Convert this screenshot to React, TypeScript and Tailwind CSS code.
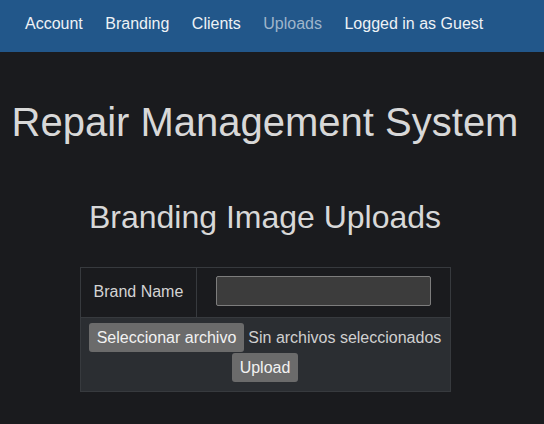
import React from "react";

export default function App() {
  const font = { fontFamily: '"Liberation Sans", Arial, sans-serif' };
  return (
    <div style={font} className="w-[544px] h-[424px] bg-[#1a1b1e] text-[#d6d6d6] overflow-hidden">
      <nav className="h-[52px] bg-[#22578a] flex items-center pl-[25px] pb-[4px] gap-[22.5px] text-[16px] text-[#eef2f6]">
        <span>Account</span>
        <span>Branding</span>
        <span>Clients</span>
        <span className="text-[#9fb5cb]">Uploads</span>
        <span>Logged in as Guest</span>
      </nav>
      <div className="w-[530px] flex flex-col items-center">
        <h1 className="mt-[46px] text-[40px] leading-[48px] font-normal text-[#d8d8d8]">Repair Management System</h1>
        <h2 className="mt-[52px] text-[32px] leading-[38px] font-normal text-[#d8d8d8]">Branding Image Uploads</h2>
        <div className="mt-[31px] w-[371px] border border-[#373a3e]">
          <div className="flex h-[50px] border-b border-[#373a3e]">
            <div className="w-[116px] shrink-0 border-r border-[#373a3e] flex items-center pl-[13px] pb-[2px] text-[16px] text-[#d4d4d4]">
              Brand Name
            </div>
            <div className="flex-1 pt-[8px] pl-[19px]">
              <input className="w-[215px] h-[30px] bg-[#3c3c3c] border border-[#7d7d7d] rounded-[2px] outline-none" />
            </div>
          </div>
          <div className="bg-[#2b2e32] pt-[5px] pb-[9px] flex flex-col items-center text-[16px]">
            <div className="flex items-center">
              <span className="h-[29px] px-[8px] flex items-center bg-[#6b6b6b] rounded-[3px] text-[#f2f2f2]">Seleccionar archivo</span>
              <span className="ml-[4px] text-[#d0d0d0]">Sin archivos seleccionados</span>
            </div>
            <span className="mt-[1px] h-[29px] px-[8px] flex items-center bg-[#6b6b6b] rounded-[3px] text-[#f2f2f2]">Upload</span>
          </div>
        </div>
      </div>
    </div>
  );
}
